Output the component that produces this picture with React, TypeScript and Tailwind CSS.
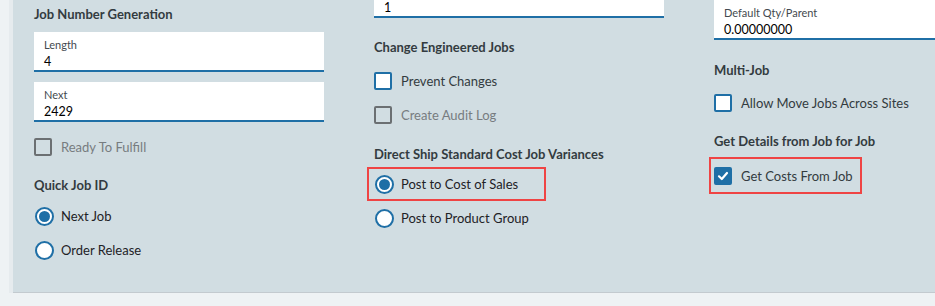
import React from "react";

const FONT = { fontFamily: "Lato, 'Noto Sans', sans-serif" };

function Heading({ children, className = "" }: { children: React.ReactNode; className?: string }) {
  return (
    <div className={`h-[20px] leading-[20px] text-[13px] font-bold text-[#333b40] whitespace-nowrap ${className}`}>
      {children}
    </div>
  );
}

function Input({ label, value, className = "" }: { label: string; value: string; className?: string }) {
  return (
    <div className={`h-[40px] w-[290px] shrink-0 bg-white border-b-2 border-[#1f6fa6] pl-[10px] flex flex-col ${className}`}>
      <div className="h-[6px] shrink-0" />
      <div className="h-[14px] shrink-0 text-[11px] leading-[14px] text-[#444a4f] whitespace-nowrap">{label}</div>
      <div className="h-[16px] mt-[2px] shrink-0 text-[12.5px] leading-[16px] text-black">{value}</div>
    </div>
  );
}

function Checkbox({
  label,
  state,
  className = "",
}: {
  label: string;
  state: "disabled" | "enabled" | "checked";
  className?: string;
}) {
  const box =
    state === "disabled"
      ? "border-2 border-[#6b6f72] bg-transparent"
      : state === "enabled"
      ? "border-2 border-[#1f6fa6] bg-white"
      : "bg-[#1f6fa6] border-2 border-[#1f6fa6]";
  const text = state === "disabled" ? "text-[#777c80]" : "text-[#333b40]";
  return (
    <div className={`h-[34px] flex items-center ${className}`}>
      <div className={`w-[18px] h-[18px] rounded-[2px] flex items-center justify-center ${box}`}>
        {state === "checked" && (
          <svg width="12" height="12" viewBox="0 0 12 12">
            <path d="M2 6.3 L4.8 9 L10 3" fill="none" stroke="white" strokeWidth="2.2" strokeLinecap="round" strokeLinejoin="round" />
          </svg>
        )}
      </div>
      <span className={`ml-[9px] mt-[2px] text-[13px] whitespace-nowrap ${text}`}>{label}</span>
    </div>
  );
}

function Radio({ label, checked, className = "" }: { label: string; checked?: boolean; className?: string }) {
  return (
    <div className={`h-[34px] flex items-center ${className}`}>
      <div className="w-[19px] h-[19px] rounded-full border-2 border-[#1f6fa6] bg-white flex items-center justify-center ml-[1px]">
        {checked && <div className="w-[11px] h-[11px] rounded-full bg-[#1f6fa6]" />}
      </div>
      <span className="ml-[7px] mt-[2px] text-[13px] text-[#1e2226] whitespace-nowrap">{label}</span>
    </div>
  );
}

export default function App() {
  return (
    <div className="w-[935px] h-[306px] bg-[#eef2f4] overflow-hidden" style={FONT}>
      <div className="pl-[9px]">
        <div className="border-l-4 border-[#e6ebee]">
          <div className="h-[293px] bg-[#d1dde2] border-b border-[#c3cacf] flex pl-[21px] overflow-hidden">
            {/* Left column */}
            <div className="w-[290px] flex flex-col shrink-0">
              <Heading className="mt-[4px]">Job Number Generation</Heading>
              <Input className="mt-[8px]" label="Length" value="4" />
              <Input className="mt-[10px]" label="Next" value="2429" />
              <Checkbox className="mt-[8px]" label="Ready To Fulfill" state="disabled" />
              <Heading className="mt-[11px]">Quick Job ID</Heading>
              <Radio className="mt-[4px]" label="Next Job" checked />
              <Radio label="Order Release" />
            </div>
            {/* Middle column */}
            <div className="w-[290px] ml-[50px] flex flex-col shrink-0">
              <Input className="mt-[-22px]" label="" value="1" />
              <Heading className="mt-[19px]">Change Engineered Jobs</Heading>
              <Checkbox className="mt-[7px]" label="Prevent Changes" state="enabled" />
              <Checkbox label="Create Audit Log" state="disabled" />
              <Heading className="mt-[12px]">Direct Ship Standard Cost Job Variances</Heading>
              <div className="mt-[3px] ml-[-7px] w-[179px] h-[34px] border-2 border-[#ef4444] pl-[5px] flex items-center">
                <Radio label="Post to Cost of Sales" checked />
              </div>
              <Radio label="Post to Product Group" />
            </div>
            {/* Right column */}
            <div className="w-[290px] ml-[50px] flex flex-col shrink-0">
              <Input label="Default Qty/Parent" value="0.00000000" />
              <Heading className="mt-[20px]">Multi-Job</Heading>
              <Checkbox className="mt-[6px]" label="Allow Move Jobs Across Sites" state="enabled" />
              <Heading className="mt-[11px]">Get Details from Job for Job</Heading>
              <div className="mt-[6px] ml-[-5px] w-[153px] h-[37px] border-2 border-[#ef4444] pl-[3px] flex items-center">
                <Checkbox label="Get Costs From Job" state="checked" />
              </div>
            </div>
          </div>
        </div>
      </div>
    </div>
  );
}
